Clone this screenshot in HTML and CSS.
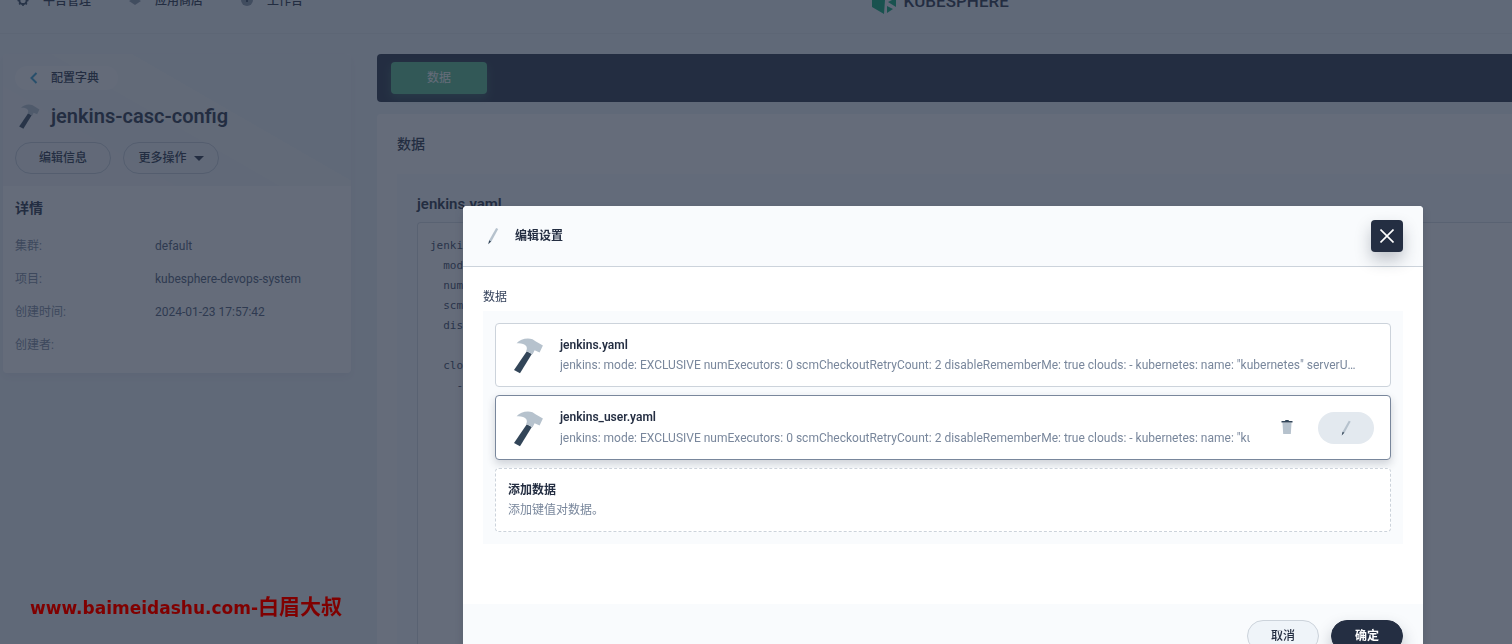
FILE: index.html
```html
<!DOCTYPE html>
<html lang="zh-CN">
<head>
<meta charset="utf-8">
<meta name="viewport" content="width=device-width, initial-scale=1">
<title>jenkins-casc-config</title>
<link rel="stylesheet" href="styles.css">
</head>
<body>
<svg class="defs" aria-hidden="true">
  <symbol id="hammer" viewBox="0 0 40 40">
    <path fill="#324558" d="M18.800 16.200 23.800 19 12 38.200 6 35z"/>
    <path fill="#b6c2cd" d="M8.600 8.200C12 4.200 19 2.200 24.500 4.200L27.500 6.200 34.900 10.600 31.600 17.600 26.600 15.200 24.600 19.200 18.200 16C20.400 11.600 17.600 7.600 8.600 8.200z"/>
  </symbol>
  <symbol id="pencil" viewBox="0 0 20 20">
    <path fill="#b6c2cd" d="M13.100 1.900 15.200 2.900 8.400 15.400 6.200 14.200z"/>
    <path fill="#324558" d="M6.200 14.200 8.200 15.400 5.200 18.200z"/>
  </symbol>
</svg>

<header class="topbar">
  <nav class="topnav">
    <a href="#" class="topnav-link">
      <svg width="16" height="16" viewBox="0 0 16 16"><circle cx="8" cy="7.500" r="3.600" fill="none" stroke="#324558" stroke-width="2"/><path stroke="#324558" stroke-width="1.600" d="M8 2v1.500M8 11.500V13M2.500 7.500H4M12 7.500h1.500M4.100 3.600l1 1M10.900 10.400l1 1M4.100 11.400l1-1M10.900 4.600l1-1"/></svg>
      平台管理
    </a>
    <a href="#" class="topnav-link">
      <svg width="16" height="16" viewBox="0 0 16 16"><path fill="#324558" d="M8 1 14 5 8 9 2 5z"/><path fill="#8896a6" d="M2 8 8 4.500 14 8 8 12z"/></svg>
      应用商店
    </a>
    <a href="#" class="topnav-link">
      <svg width="16" height="16" viewBox="0 0 16 16"><circle cx="8" cy="7" r="6" fill="#8896a6"/><path fill="#324558" d="M7 3h2v6H7z"/></svg>
      工作台
    </a>
  </nav>
  <a href="#" class="brand">
    <svg width="26" height="28" viewBox="0 0 26 28"><path fill="#00a971" d="M13 1 25 8 14 13 13 27 1 20V8z"/><path fill="#00a971" d="M16 19 22 22 16 26z"/><path fill="#00a971" d="M17 15 25 11V20z"/></svg>
    <span>KUBESPHERE</span>
  </a>
</header>

<main class="page">
  <aside class="side">
    <section class="side-head">
      <a href="#" class="back">
        <svg width="8" height="12" viewBox="0 0 8 12"><path fill="none" stroke="#329dce" stroke-width="2" d="M6.500 1 1.500 6l5 5"/></svg>
        配置字典
      </a>
      <h1 class="resource">
        <svg width="28" height="28"><use href="#hammer"/></svg>
        jenkins-casc-config
      </h1>
      <div class="side-actions">
        <button type="button" class="pill">编辑信息</button>
        <button type="button" class="pill">更多操作
          <svg width="10" height="5" viewBox="0 0 10 5"><path fill="#242e42" d="M0 0h10L5 5z"/></svg>
        </button>
      </div>
    </section>
    <section class="side-body">
      <h2 class="side-title">详情</h2>
      <dl class="facts">
        <dt>集群:</dt><dd>default</dd>
        <dt>项目:</dt><dd>kubesphere-devops-system</dd>
        <dt>创建时间:</dt><dd>2024-01-23 17:57:42</dd>
        <dt>创建者:</dt><dd></dd>
      </dl>
    </section>
  </aside>

  <div class="main">
    <nav class="tabs"><a href="#" class="tab">数据</a></nav>
    <section class="card">
      <h2 class="card-title">数据</h2>
      <div class="entry">
        <h3 class="entry-title">jenkins.yaml</h3>
        <pre class="code">jenkins:
  mode: EXCLUSIVE
  numExecutors: 0
  scmCheckoutRetryCount: 2
  disableRememberMe: true

  clouds:
    - kubernetes:</pre>
      </div>
    </section>
  </div>
</main>

<div class="overlay">
  <div class="modal" role="dialog" aria-modal="true" aria-labelledby="modal-title">
    <header class="modal-head">
      <svg width="20" height="20"><use href="#pencil"/></svg>
      <h2 id="modal-title" class="modal-title">编辑设置</h2>
      <button type="button" class="close" aria-label="关闭">
        <svg width="14" height="14" viewBox="0 0 14 14"><path fill="none" stroke="#fff" stroke-width="1.600" d="M.5.5l13 13M13.500.5l-13 13"/></svg>
      </button>
    </header>
    <div class="modal-body">
      <p class="label">数据</p>
      <div class="list">
        <article class="item">
          <svg class="item-icon" width="40" height="40"><use href="#hammer"/></svg>
          <div class="item-text">
            <strong class="item-name">jenkins.yaml</strong>
            <p class="item-desc item-desc-short">jenkins: mode: EXCLUSIVE numExecutors: 0 scmCheckoutRetryCount: 2 disableRememberMe: true clouds: - kubernetes: name: "kubernetes" serverUrl: "https://kubernetes.default"</p>
          </div>
        </article>
        <article class="item item-active">
          <svg class="item-icon" width="40" height="40"><use href="#hammer"/></svg>
          <div class="item-text">
            <strong class="item-name">jenkins_user.yaml</strong>
            <p class="item-desc">jenkins: mode: EXCLUSIVE numExecutors: 0 scmCheckoutRetryCount: 2 disableRememberMe: true clouds: - kubernetes: name: "kubernetes" serverUrl</p>
          </div>
          <div class="item-actions">
            <button type="button" class="icon-btn" aria-label="删除">
              <svg width="16" height="16" viewBox="0 0 16 16"><path fill="#b6c2cd" d="M3.500 2.500h9l-.7 11.500H4.200z"/><path fill="#324558" d="M2.500 1H6l.5-1h3l.5 1h3.500v1.500h-11z"/></svg>
            </button>
            <button type="button" class="icon-btn icon-btn-fill" aria-label="编辑">
              <svg width="18" height="18"><use href="#pencil"/></svg>
            </button>
          </div>
        </article>
        <button type="button" class="add">
          <span class="item-name">添加数据</span>
          <span class="item-desc">添加键值对数据。</span>
        </button>
      </div>
    </div>
    <footer class="modal-foot">
      <button type="button" class="btn">取消</button>
      <button type="button" class="btn btn-dark">确定</button>
    </footer>
  </div>
</div>
<div class="watermark">www.baimeidashu.com-<span>白眉大叔</span></div>
</body>
</html>
```
FILE: styles.css
```css
* { box-sizing: border-box; }

body {
  margin: 0;
  height: 100vh;
  overflow: hidden;
  background: #eff4f9;
  color: #242e42;
  font: 12px/20px Roboto, "Noto Sans CJK SC", sans-serif;
}

h1, h2, h3, p, dl, dd, pre { margin: 0; }
a { color: inherit; text-decoration: none; }
button { font: inherit; color: inherit; cursor: pointer; }
svg { flex: none; display: block; }
.defs { position: absolute; width: 0; height: 0; }

/* The page is scrolled so that half of the top bar is out of view. */
.topbar {
  display: flex;
  align-items: center;
  height: 66px;
  margin-top: -32px;
  padding-left: 15px;
  border-bottom: 1px solid #e3e9ef;
}
.topnav { display: flex; flex: 1; gap: 36px; font-weight: 500; }
.topnav-link { display: flex; align-items: center; gap: 12px; }
.brand {
  display: flex;
  align-items: center;
  flex: 1;
  gap: 7px;
  margin-left: 214px;
  font-size: 17px;
  font-weight: 500;
}

.page { display: flex; gap: 26px; padding: 20px 0 0 3px; }
.side {
  width: 348px;
  flex: none;
  align-self: flex-start;
  overflow: hidden;
  border-radius: 4px;
  background: #fff;
  box-shadow: 0 4px 8px rgba(36, 46, 66, .06);
}
.side-head {
  padding: 12px;
  background: linear-gradient(30deg, #f3f5f8 0 30%, #f0f4f8 30% 48%, #f6f7f9 48% 62%, #eff4f9 62%);
}
.back {
  display: inline-flex;
  align-items: center;
  gap: 13px;
  height: 24px;
  padding: 0 19px 0 15px;
  border-radius: 12px;
  background: #fbfbfc;
  font-weight: 500;
}
.resource {
  display: flex;
  align-items: center;
  gap: 8px;
  margin: 12px 0;
  font-size: 20px;
  line-height: 28px;
  font-weight: 600;
}
.side-actions { display: flex; gap: 12px; }
.pill {
  display: flex;
  align-items: center;
  justify-content: center;
  gap: 7px;
  width: 96px;
  height: 32px;
  border: 1px solid #c6ced8;
  border-radius: 16px;
  background: none;
  font-weight: 500;
}
.side-body { padding: 12px 12px 18px; }
.side-title { font-size: 14px; }
.facts {
  display: grid;
  grid-template-columns: 140px 1fr;
  grid-auto-rows: 20px;
  gap: 13px 0;
  margin-top: 18px;
}
.facts dt { color: #79879c; }
.facts dd { color: #4a5974; }

.main { flex: 1; min-width: 0; }
.tabs {
  display: flex;
  padding: 8px 14px;
  border-radius: 4px 0 0 4px;
  background: #242e42;
}
.tab {
  width: 96px;
  border-radius: 4px;
  background: #55bc8a;
  box-shadow: 0 4px 8px rgba(85, 188, 138, .3);
  color: #fff;
  line-height: 32px;
  text-align: center;
}
.card {
  margin-top: 12px;
  padding: 20px 0 0 20px;
  border-radius: 4px 0 0 0;
  background: #fff;
}
.card-title { font-size: 14px; font-weight: 500; }
.entry {
  min-height: 100vh;
  margin-top: 20px;
  padding: 20px 0 0 20px;
  background: #f9fbfd;
}
.entry-title { font-size: 15px; font-weight: 600; }
.code {
  min-height: 100vh;
  margin-top: 8px;
  padding: 13px 12px;
  border: 1px solid #d5dce4;
  border-right: 0;
  border-radius: 4px 0 0 0;
  background: #fff;
  color: #36435c;
  font: 11px/20px "DejaVu Sans Mono", monospace;
}

.overlay {
  position: fixed;
  inset: 0;
  display: flex;
  justify-content: flex-end;
  align-items: flex-start;
  padding: 206px 89px 0 20px;
  overflow: hidden;
  background: rgba(35, 45, 65, .7);
}
.modal {
  width: 100%;
  max-width: 960px;
  border-radius: 4px;
  background: #fff;
  box-shadow: 0 4px 8px rgba(36, 46, 66, .2);
}
.modal-head {
  display: flex;
  align-items: center;
  padding: 14px 20px;
  border-bottom: 1px solid #ccd3db;
  border-radius: 4px 4px 0 0;
  background: #f9fbfd;
}
.modal-title { flex: 1; margin-left: 12px; font-size: 12px; font-weight: 700; }
.close {
  display: grid;
  place-items: center;
  width: 32px;
  height: 32px;
  padding: 0;
  border: 0;
  border-radius: 4px;
  background: #242e42;
  box-shadow: 0 8px 16px rgba(36, 46, 66, .28);
}
.modal-body { padding: 20px 20px 60px; }
.label { margin-bottom: 4px; color: #36435c; }
.list {
  display: flex;
  flex-direction: column;
  gap: 8px;
  padding: 12px;
  background: #f9fbfd;
}
.item {
  display: flex;
  align-items: center;
  gap: 12px;
  padding: 11px 16px 11px 12px;
  border: 1px solid #ccd3db;
  border-radius: 4px;
  background: #fff;
}
.item-active {
  border-color: #79879c;
  box-shadow: 0 4px 8px rgba(36, 46, 66, .2);
}
.item-text { display: grid; flex: 1; min-width: 0; }
.item-active .item-text { row-gap: 1px; }
.item-name { font-weight: 600; }
.item-desc { overflow: hidden; color: #79879c; white-space: nowrap; }
.item-desc-short { max-width: 797px; text-overflow: ellipsis; }
.item-actions { display: flex; gap: 6px; }
.icon-btn {
  display: grid;
  place-items: center;
  width: 50px;
  height: 32px;
  padding: 0;
  border: 0;
  border-radius: 16px;
  background: none;
}
.icon-btn-fill { width: 56px; background: #e3e9ef; }
.add {
  display: grid;
  padding: 11px 12px;
  border: 1px dashed #ccd3db;
  border-radius: 4px;
  background: #fff;
  text-align: left;
}
.modal-foot {
  display: flex;
  justify-content: flex-end;
  gap: 12px;
  padding: 16px 20px;
  border-radius: 0 0 4px 4px;
  background: #f9fbfd;
}
.btn {
  width: 72px;
  height: 32px;
  padding: 0;
  border: 1px solid #ccd3db;
  border-radius: 16px;
  background: #eff4f9;
  font-weight: 500;
}
.btn-dark {
  border-color: #242e42;
  background: #242e42;
  box-shadow: 0 8px 16px rgba(36, 46, 66, .28);
  color: #fff;
  font-weight: 700;
}

.watermark {
  position: fixed;
  left: 30px;
  bottom: 23px;
  color: #800000;
  font: bold 17px/26px "DejaVu Sans", sans-serif;
}
.watermark span { font: 700 21px/26px "Noto Sans CJK SC", sans-serif; }
```
